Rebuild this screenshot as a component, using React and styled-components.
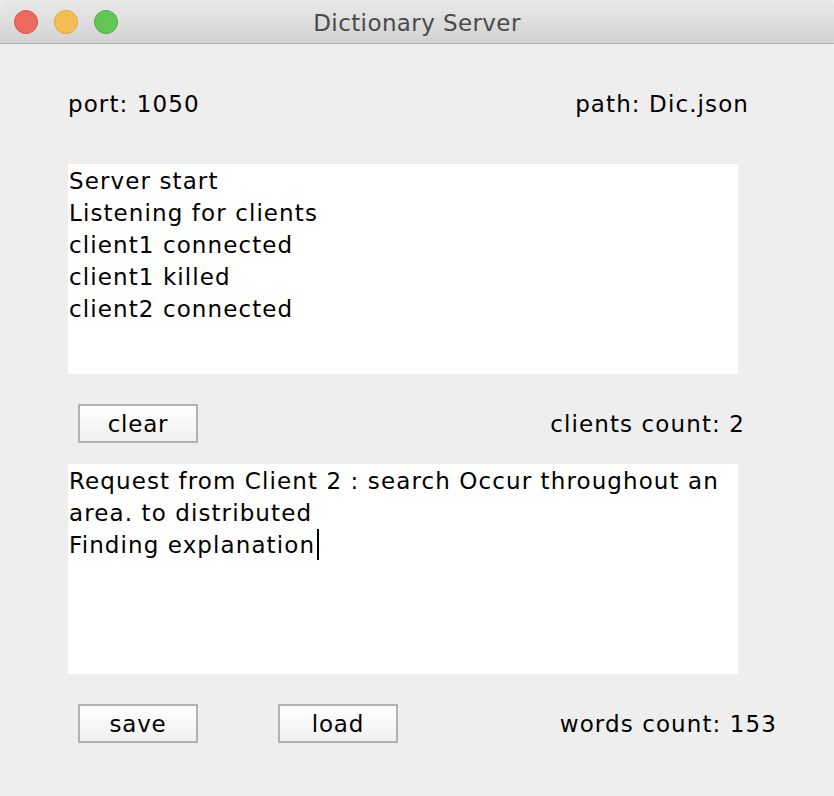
import React from "react";
import styled, { createGlobalStyle } from "styled-components";

const Global = createGlobalStyle`
  html, body { margin: 0; padding: 0; background: #eeeeee; }
  body { width: 834px; height: 796px; overflow: hidden; }
`;

const Win = styled.div`
  width: 834px;
  height: 796px;
  background: #eeeeee;
  display: flex;
  flex-direction: column;
  font-family: "DejaVu Sans", "Liberation Sans", sans-serif;
  color: #000;
`;

const TitleBar = styled.div`
  height: 43px;
  flex: none;
  position: relative;
  display: flex;
  align-items: center;
  justify-content: center;
  background: linear-gradient(#e9e9e9, #d2d2d2);
  border-bottom: 1px solid #b3b3b3;
  border-radius: 6px 6px 0 0;
`;

const Lights = styled.div`
  position: absolute;
  left: 14px;
  top: 10px;
  display: flex;
  gap: 16px;
`;

const Light = styled.span`
  width: 24px;
  height: 24px;
  border-radius: 50%;
  box-sizing: border-box;
  background: ${(p) => p.$c};
  border: 1px solid ${(p) => p.$b};
`;

const Title = styled.div`
  font-size: 23px;
  color: #4a4a4a;
  letter-spacing: 0.4px;
  padding-top: 2px;
`;

const Body = styled.div`
  display: flex;
  flex-direction: column;
  padding: 0 0 0 68px;
`;

const Row = styled.div`
  display: flex;
  align-items: center;
  justify-content: space-between;
  height: ${(p) => p.$h}px;
  margin-top: ${(p) => p.$mt}px;
  padding-right: ${(p) => p.$pr}px;
  padding-left: ${(p) => p.$pl || 0}px;
`;

const Label = styled.span`
  font-size: 23px;
  letter-spacing: 1.1px;
  white-space: nowrap;
`;

const Group = styled.div`
  display: flex;
  gap: 80px;
`;

const Button = styled.button`
  width: 120px;
  height: 39px;
  box-sizing: border-box;
  border: 2px solid #b2b2b2;
  background: linear-gradient(#ffffff, #f0f0f0);
  font-family: inherit;
  font-size: 23px;
  letter-spacing: 0.8px;
  color: #000;
  padding: 0;
  margin: 0;
`;

const Area = styled.div`
  width: 670px;
  height: 210px;
  margin-top: ${(p) => p.$mt}px;
  background: #ffffff;
  box-sizing: border-box;
  padding: 1px 0 0 1px;
  font-size: 23px;
  letter-spacing: 1.1px;
  line-height: 32px;
`;

const Line = styled.div`
  white-space: nowrap;
`;

const Caret = styled.span`
  display: inline-block;
  width: 2px;
  height: 31px;
  background: #000;
  vertical-align: -7px;
  margin-left: 2px;
`;

export default function App() {
  return (
    <>
      <Global />
      <Win>
        <TitleBar>
          <Lights>
            <Light $c="#ee6a5f" $b="#d9534a" />
            <Light $c="#f6be50" $b="#dea73e" />
            <Light $c="#62c655" $b="#52aa45" />
          </Lights>
          <Title>Dictionary Server</Title>
        </TitleBar>
        <Body>
          <Row $h={40} $mt={40} $pr={85}>
            <Label>port: 1050</Label>
            <Label>path: Dic.json</Label>
          </Row>
          <Area $mt={40}>
            <Line>Server start</Line>
            <Line>Listening for clients</Line>
            <Line>client1 connected</Line>
            <Line>client1 killed</Line>
            <Line>client2 connected</Line>
          </Area>
          <Row $h={39} $mt={30} $pr={89} $pl={10}>
            <Button>clear</Button>
            <Label>clients count: 2</Label>
          </Row>
          <Area $mt={21}>
            <Line>Request from Client 2 : search Occur throughout an</Line>
            <Line>area. to distributed</Line>
            <Line>
              Finding explanation
              <Caret />
            </Line>
          </Area>
          <Row $h={39} $mt={30} $pr={57} $pl={10}>
            <Group>
              <Button>save</Button>
              <Button>load</Button>
            </Group>
            <Label>words count: 153</Label>
          </Row>
        </Body>
      </Win>
    </>
  );
}
